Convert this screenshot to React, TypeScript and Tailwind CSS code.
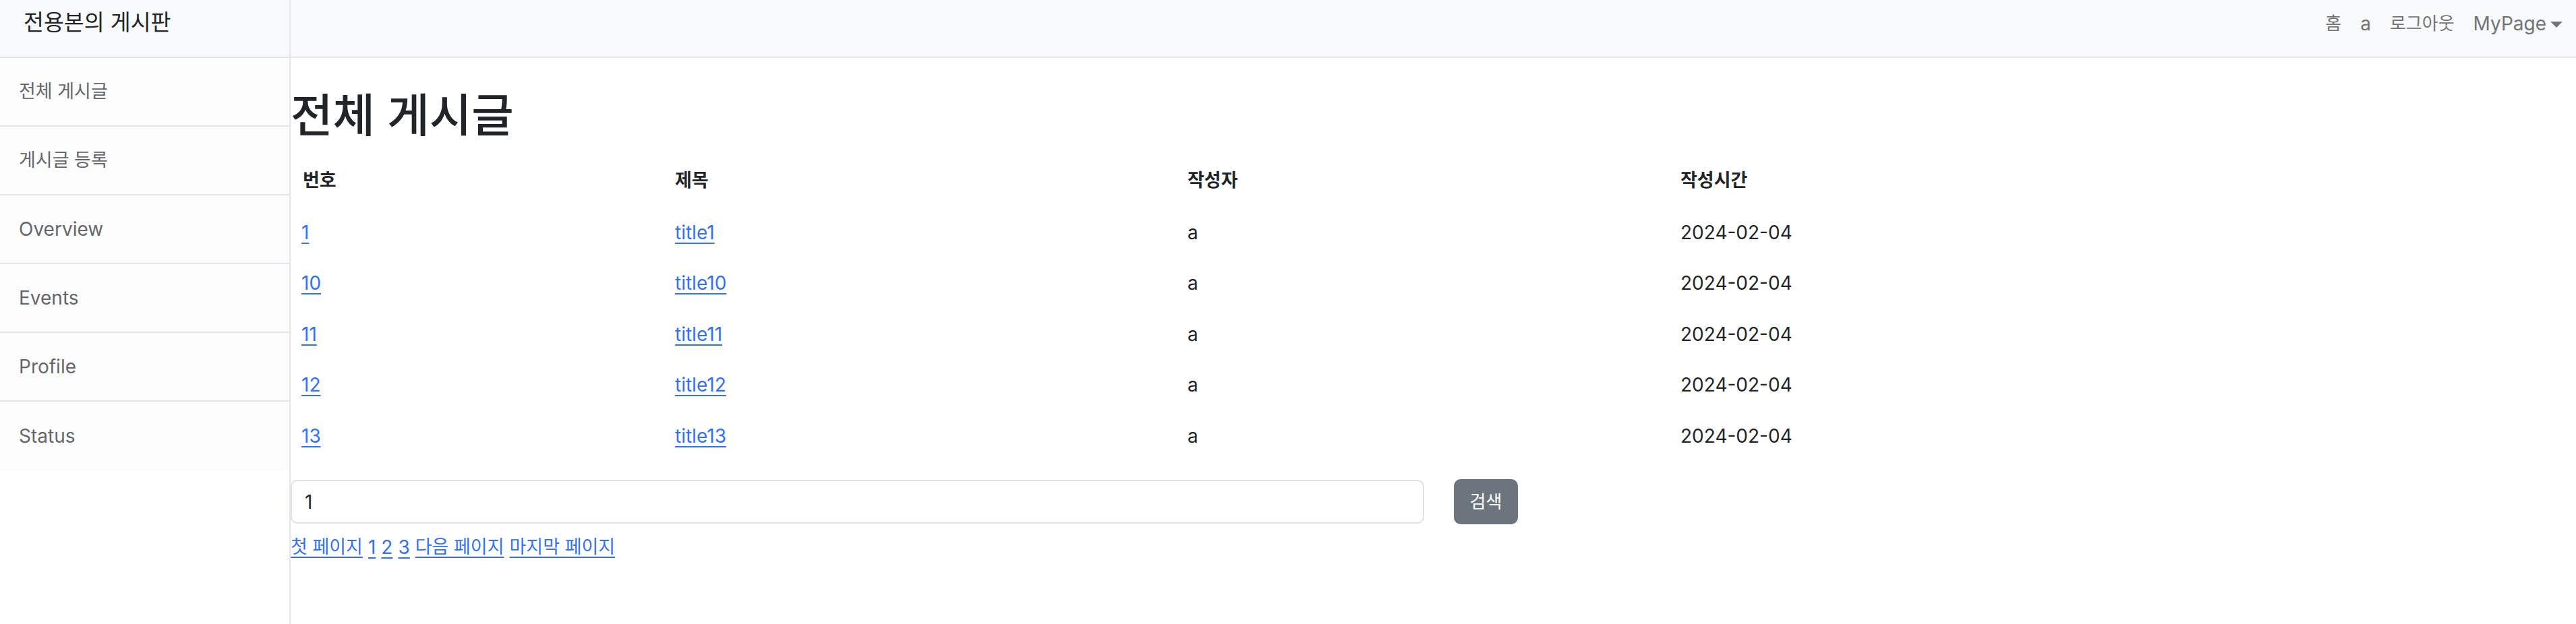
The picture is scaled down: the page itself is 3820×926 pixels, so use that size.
const menu = [
  { label: '전체 게시글', ko: true },
  { label: '게시글 등록', ko: true },
  { label: 'Overview', ko: false },
  { label: 'Events', ko: false },
  { label: 'Profile', ko: false },
  { label: 'Status', ko: false },
];

const posts = [
  { id: 1, title: 'title1', writer: 'a', date: '2024-02-04' },
  { id: 10, title: 'title10', writer: 'a', date: '2024-02-04' },
  { id: 11, title: 'title11', writer: 'a', date: '2024-02-04' },
  { id: 12, title: 'title12', writer: 'a', date: '2024-02-04' },
  { id: 13, title: 'title13', writer: 'a', date: '2024-02-04' },
];

const linkCls = 'text-[#3470f5] underline decoration-2 underline-offset-[5px]';
const cols = 'grid grid-cols-[553px_760px_731px_1fr] items-center';

export default function App() {
  return (
    <div className="flex h-screen w-full bg-white text-[#212529] font-['Inter','Noto_Sans_CJK_KR',sans-serif]">
      {/* Sidebar */}
      <aside className="w-[431px] shrink-0 border-r-2 border-[#e3e6ea] flex flex-col">
        <div className="h-[86px] bg-[#f8f9fa] border-b-2 border-[#e3e6ea] pl-[35px] pt-[11px] text-[32.5px] leading-[46px]">
          전용본의 게시판
        </div>
        <nav className="flex flex-col">
          {menu.map(item => (
            <a
              key={item.label}
              className={
                'h-[102px] flex items-center pl-[28px] bg-[#fcfcfd] text-[#63676b] border-b-2 border-[#e3e6ea] last:border-b-0 ' +
                (item.ko ? 'text-[27px]' : 'text-[28px]')
              }
            >
              {item.label}
            </a>
          ))}
        </nav>
      </aside>

      {/* Main column */}
      <div className="flex-1 flex flex-col min-w-0">
        <header className="h-[86px] bg-[#f8f9fa] border-b-2 border-[#e3e6ea] flex justify-end items-start pt-[14px] pr-[6px] text-[#727476]">
          <a className="px-[14px] text-[26px] leading-[42px]">홈</a>
          <a className="px-[14px] text-[28px] leading-[42px]">a</a>
          <a className="px-[14px] text-[26px] leading-[42px]">로그아웃</a>
          <a className="pl-[14px] pr-[14px] text-[28px] leading-[42px] flex items-center">
            MyPage
            <span className="ml-[6px] mt-[2px] w-0 h-0 border-t-[9px] border-t-[#727476] border-l-[9px] border-l-transparent border-r-[9px] border-r-transparent" />
          </a>
        </header>

        <main className="pt-[41px]">
          <h1 className="text-[68px] leading-[88px] font-medium mb-[15px]">전체 게시글</h1>

          <div className="flex flex-col">
            <div className={cols + ' h-[77px] text-[27px] font-bold'}>
              <div className="pl-[18px]">번호</div>
              <div className="pl-[17px]">제목</div>
              <div className="pl-[17px]">작성자</div>
              <div className="pl-[17px]">작성시간</div>
            </div>
            {posts.map(p => (
              <div key={p.id} className={cols + ' h-[75.5px] text-[28px] leading-[42px]'}>
                <div className="pl-[16px]">
                  <a className={linkCls}>{p.id}</a>
                </div>
                <div className="pl-[17px]">
                  <a className={linkCls}>{p.title}</a>
                </div>
                <div className="pl-[17px]">{p.writer}</div>
                <div className="pl-[17px]">{p.date}</div>
              </div>
            ))}
          </div>

          <form className="flex items-center mt-[26.5px]">
            <input
              defaultValue="1"
              className="w-[1681px] h-[65px] border-2 border-[#dee2e6] rounded-[10px] pl-[19px] text-[28px] text-[#212529] outline-none"
            />
            <button
              type="button"
              className="ml-[44px] w-[95px] h-[67px] rounded-[10px] bg-[#6c757d] text-white text-[26px]"
            >
              검색
            </button>
          </form>

          <div className="flex items-center gap-[8px] mt-[13px] leading-[42px]">
            <a className={linkCls + ' text-[27px]'}>첫 페이지</a>
            <a className={linkCls + ' text-[28px]'}>1</a>
            <a className={linkCls + ' text-[28px]'}>2</a>
            <a className={linkCls + ' text-[28px]'}>3</a>
            <a className={linkCls + ' text-[27px]'}>다음 페이지</a>
            <a className={linkCls + ' text-[27px]'}>마지막 페이지</a>
          </div>
        </main>
      </div>
    </div>
  );
}
